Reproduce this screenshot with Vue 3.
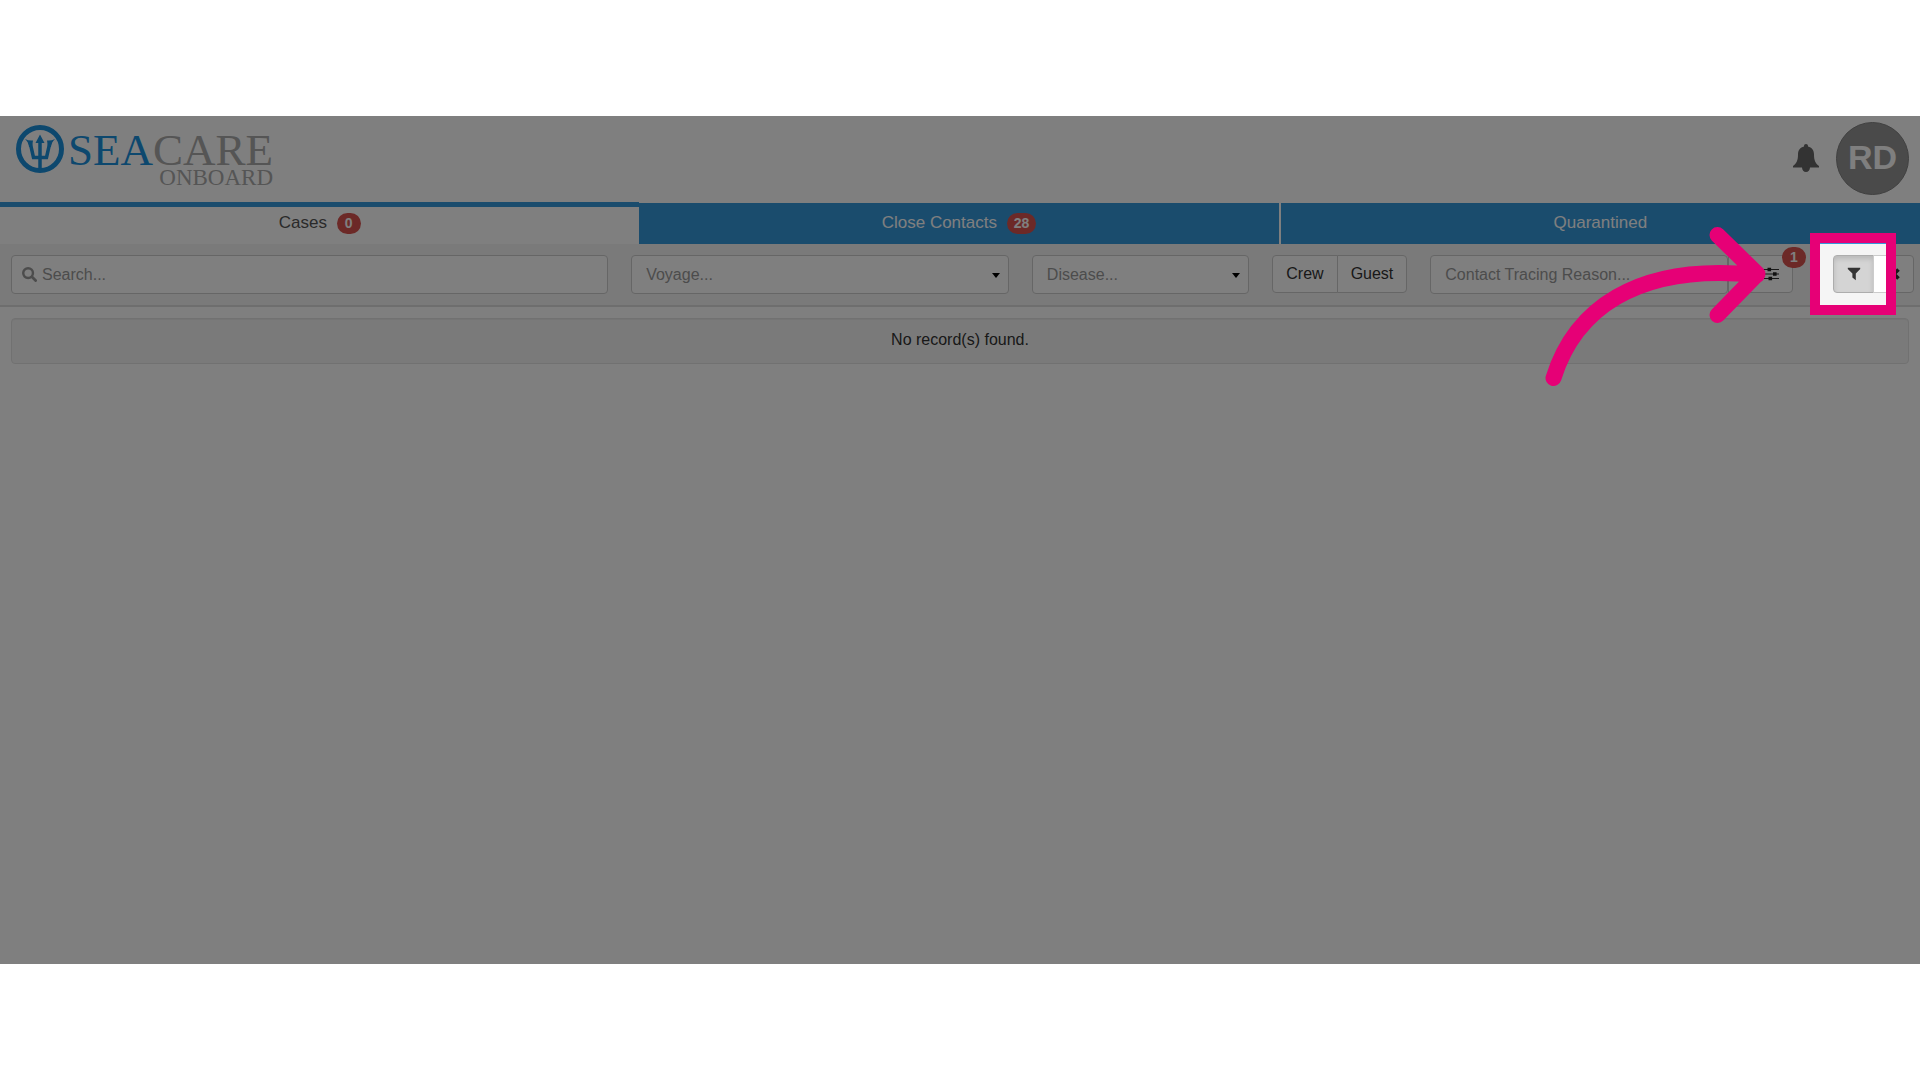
<script setup>
import { ref } from "vue";

const tabs = [
  { id: "cases", label: "Cases", count: "0" },
  { id: "contacts", label: "Close Contacts", count: "28" },
  { id: "quarantined", label: "Quarantined", count: null },
];

const activeTab = ref("cases");
const search = ref("");
const voyage = ref("");
const disease = ref("");
const reason = ref("");
const filtersOn = ref(true);

function clearFilters() {
  search.value = "";
  voyage.value = "";
  disease.value = "";
  reason.value = "";
}
</script>

<template>
  <div class="page">
    <div class="app">
      <header class="header">
        <div class="logo">
          <svg class="logo-mark" viewBox="0 0 48 48" aria-hidden="true">
            <circle cx="24" cy="24" r="21.5" fill="none" stroke="#1a90dc" stroke-width="5" />
            <path fill="none" stroke="#1a90dc" stroke-width="3.5" d="M24 46V15M14 17L17.500 32.500H30.500L34 17" />
            <path fill="#1a90dc" d="M24 9.500L28.500 18H19.500ZM9 14Q13 16 17 15.500L16 22L13 22Q12.500 17 9 14ZM39 14Q35 16 31 15.500L32 22L35 22Q35.500 17 39 14Z" />
          </svg>
          <div class="logo-text">
            <div class="logo-name"><span>SEA</span>CARE</div>
            <div class="logo-sub">ONBOARD</div>
          </div>
        </div>
        <div class="user">
          <button class="bell" aria-label="Notifications">
            <svg viewBox="0 0 26 28">
              <path d="M13 0c1.200 0 2 .8 2 2v.6c3.800.8 6 3.800 6 7.900 0 6 1.500 9 5 11.500v1.500H17c0 2.500-1.800 4.500-4 4.500s-4-2-4-4.500H0V22c3.500-2.500 5-5.500 5-11.500 0-4.100 2.200-7.100 6-7.900V2c0-1.200.8-2 2-2z" />
            </svg>
          </button>
          <button class="avatar">RD</button>
        </div>
      </header>

      <nav class="tabs">
        <button
          v-for="tab in tabs"
          :key="tab.id"
          class="tab"
          :class="{ active: tab.id === activeTab }"
          @click="activeTab = tab.id"
        >
          {{ tab.label }}
          <span v-if="tab.count" class="badge">{{ tab.count }}</span>
        </button>
      </nav>

      <div class="filters">
        <div class="search">
          <svg viewBox="0 0 16 16" aria-hidden="true">
            <circle cx="6.500" cy="6.500" r="5.200" fill="none" stroke="#999" stroke-width="2.600" />
            <path d="M10.500 10.500L14.500 14.500" stroke="#999" stroke-width="3" stroke-linecap="round" />
          </svg>
          <input v-model="search" class="field" type="text" placeholder="Search..." aria-label="Search" />
        </div>

        <div class="picker voyage">
          <select v-model="voyage" class="field" aria-label="Voyage">
            <option value="">Voyage...</option>
          </select>
        </div>

        <div class="picker disease">
          <select v-model="disease" class="field" aria-label="Disease">
            <option value="">Disease...</option>
          </select>
        </div>

        <div class="group">
          <button class="btn">Crew</button>
          <button class="btn">Guest</button>
        </div>

        <div class="group reason">
          <input v-model="reason" class="field" type="text" placeholder="Contact Tracing Reason..." aria-label="Contact Tracing Reason" />
          <button class="btn sliders" aria-label="More filters">
            <svg viewBox="0 0 16 14">
              <path stroke="#333" stroke-width="1.200" d="M0 2.500H16M0 7H16M0 11.500H16" />
              <path fill="#222" d="M4.500 .7h3.600v3.600H4.500zM10 5.200h3.600v3.600H10zM5.500 9.700h3.600v3.600H5.500z" />
            </svg>
            <span class="badge corner">1</span>
          </button>
        </div>

        <div class="group toggles">
          <button class="btn icon" :class="{ pressed: filtersOn }" aria-label="Filter" @click="filtersOn = !filtersOn">
            <svg viewBox="0 0 14 14"><path fill="#333" d="M.8 .8H13.200V2L8.800 6.600V13.200L5.400 10.400V6.600L.8 2Z" /></svg>
          </button>
          <button class="btn icon" aria-label="Clear" @click="clearFilters">
            <svg viewBox="0 0 14 14"><path stroke="#333" stroke-width="3.600" d="M2.500 2.500L11.500 11.500M11.500 2.500L2.500 11.500" /></svg>
          </button>
        </div>
      </div>

      <main class="content">
        <div class="well">No record(s) found.</div>
      </main>

      <!-- walkthrough highlight -->
      <div class="spotlight"></div>
      <svg class="arrow" viewBox="0 0 220 170" aria-hidden="true">
        <path d="M13.500 153C34 87 94 37 217 50M177.500 10L217.500 49L177.500 90" />
      </svg>
    </div>
  </div>
</template>

<style>
body {
  margin: 0;
  background: #fff;
}
</style>

<style scoped>
* {
  box-sizing: border-box;
}

.page {
  display: flex;
  align-items: center;
  min-height: 100vh;
  font-family: "Liberation Sans", Arial, sans-serif;
  font-size: 16px;
  line-height: 22px;
  color: #333;
}

.app {
  position: relative;
  width: 100%;
  min-height: calc(100vh - 232px);
  background: #fff;
  overflow: hidden;
}

button,
input,
select {
  font: inherit;
  color: inherit;
  margin: 0;
}

button {
  cursor: pointer;
}

/* header */
.header {
  display: flex;
  justify-content: space-between;
  height: 87px;
  padding: 6px 11px 0 16px;
}

.logo {
  display: flex;
  gap: 4px;
  padding-top: 3px;
}

.logo-mark {
  width: 48px;
  height: 48px;
}

.logo-text {
  padding-top: 3px;
  font-family: "Liberation Serif", "Times New Roman", serif;
  text-align: right;
  color: #aaa;
}

.logo-name {
  font-size: 45px;
  line-height: 44px;
}

.logo-name span {
  color: #1a90dc;
}

.logo-sub {
  font-size: 23px;
  line-height: 12px;
}

.user {
  display: flex;
  align-items: flex-start;
  gap: 17px;
}

.bell {
  height: 73px;
  padding: 0 0 2px;
  border: 0;
  background: none;
}

.bell svg {
  display: block;
  width: 26px;
  height: 28px;
  fill: #666;
}

.avatar {
  width: 73px;
  height: 73px;
  padding: 0 0 3px;
  border: 1px solid #808080;
  border-radius: 50%;
  background: #949494;
  color: #fff;
  font-size: 34px;
  font-weight: bold;
}

/* tabs */
.tabs {
  display: flex;
  align-items: flex-end;
  gap: 2px;
  height: 41px;
}

.tab {
  flex: 1;
  height: 41px;
  padding: 0 0 2px;
  border: 0;
  background: #3498db;
  color: #fff;
  font-size: 17px;
}

.tab.active {
  height: 42px;
  margin-right: -2px;
  padding-bottom: 6px;
  border-top: 5px solid #3498db;
  background: #fff;
  color: #555;
}

.badge {
  display: inline-block;
  min-width: 24px;
  height: 21px;
  margin-left: 5px;
  padding: 0 7px;
  border-radius: 11px;
  background: #d9534f;
  color: #fff;
  font-size: 14px;
  font-weight: bold;
  line-height: 20px;
  text-align: center;
}

/* filter bar */
.filters {
  display: flex;
  align-items: flex-start;
  gap: 23px;
  height: 63px;
  padding: 11px 6px 0 11px;
  border-bottom: 2px solid #ddd;
  background: #f5f5f5;
}

.field {
  display: block;
  width: 100%;
  height: 39px;
  padding: 0 14px;
  border: 1px solid #ccc;
  border-radius: 4px;
  background: #fff;
  color: #999;
  appearance: none;
  outline: none;
}

.field::placeholder {
  color: #999;
  opacity: 1;
}

.search {
  position: relative;
  flex: 596;
}

.search svg {
  position: absolute;
  top: 12px;
  left: 11px;
  width: 15px;
  height: 15px;
}

.search .field {
  padding-left: 30px;
}

.picker {
  position: relative;
}

.picker::after {
  content: "";
  position: absolute;
  top: 18px;
  right: 9px;
  border: 4px solid transparent;
  border-top: 5px solid #000;
  border-bottom: 0;
}

.voyage {
  flex: 377;
}

.disease {
  flex: 217;
}

.group {
  display: flex;
}

.btn {
  height: 38px;
  padding: 0 13px;
  border: 1px solid #ccc;
  border-radius: 4px;
  background: #fff;
}

.btn + .btn {
  margin-left: -1px;
}

.group > :not(:last-child) {
  border-top-right-radius: 0;
  border-bottom-right-radius: 0;
}

.group > :not(:first-child) {
  border-top-left-radius: 0;
  border-bottom-left-radius: 0;
}

.reason {
  flex: 362;
}

.reason .field {
  flex: 1;
  border-radius: 4px;
}

.sliders {
  position: relative;
  width: 65px;
}

.sliders svg {
  display: block;
  width: 16px;
  height: 14px;
  margin-left: auto;
}

.corner {
  position: absolute;
  top: -9px;
  right: -14px;
}

.toggles {
  margin-left: 17px;
}

.icon {
  width: 41px;
  padding: 0;
}

.icon svg {
  display: block;
  width: 14px;
  height: 14px;
  margin: 0 auto;
}

.pressed {
  border-color: #adadad;
  background: #d4d4d4;
  box-shadow: inset 0 3px 5px rgba(0, 0, 0, 0.125);
}

/* records */
.content {
  padding: 11px;
}

.well {
  padding: 10px 11px 12px;
  border: 1px solid #e3e3e3;
  border-radius: 4px;
  background: #f5f5f5;
  box-shadow: inset 0 1px 1px rgba(0, 0, 0, 0.05);
  text-align: center;
}

/* highlight overlay */
.spotlight {
  position: absolute;
  top: 117px;
  right: 24px;
  width: 86px;
  height: 82px;
  border: 10px solid #e60076;
  box-shadow: 0 0 0 9999px rgba(0, 0, 0, 0.5);
  pointer-events: none;
}

.arrow {
  position: absolute;
  top: 109px;
  right: 160px;
  width: 220px;
  height: 170px;
  overflow: visible;
  fill: none;
  stroke: #e60076;
  stroke-width: 16px;
  stroke-linecap: round;
  stroke-linejoin: round;
  pointer-events: none;
}
</style>
